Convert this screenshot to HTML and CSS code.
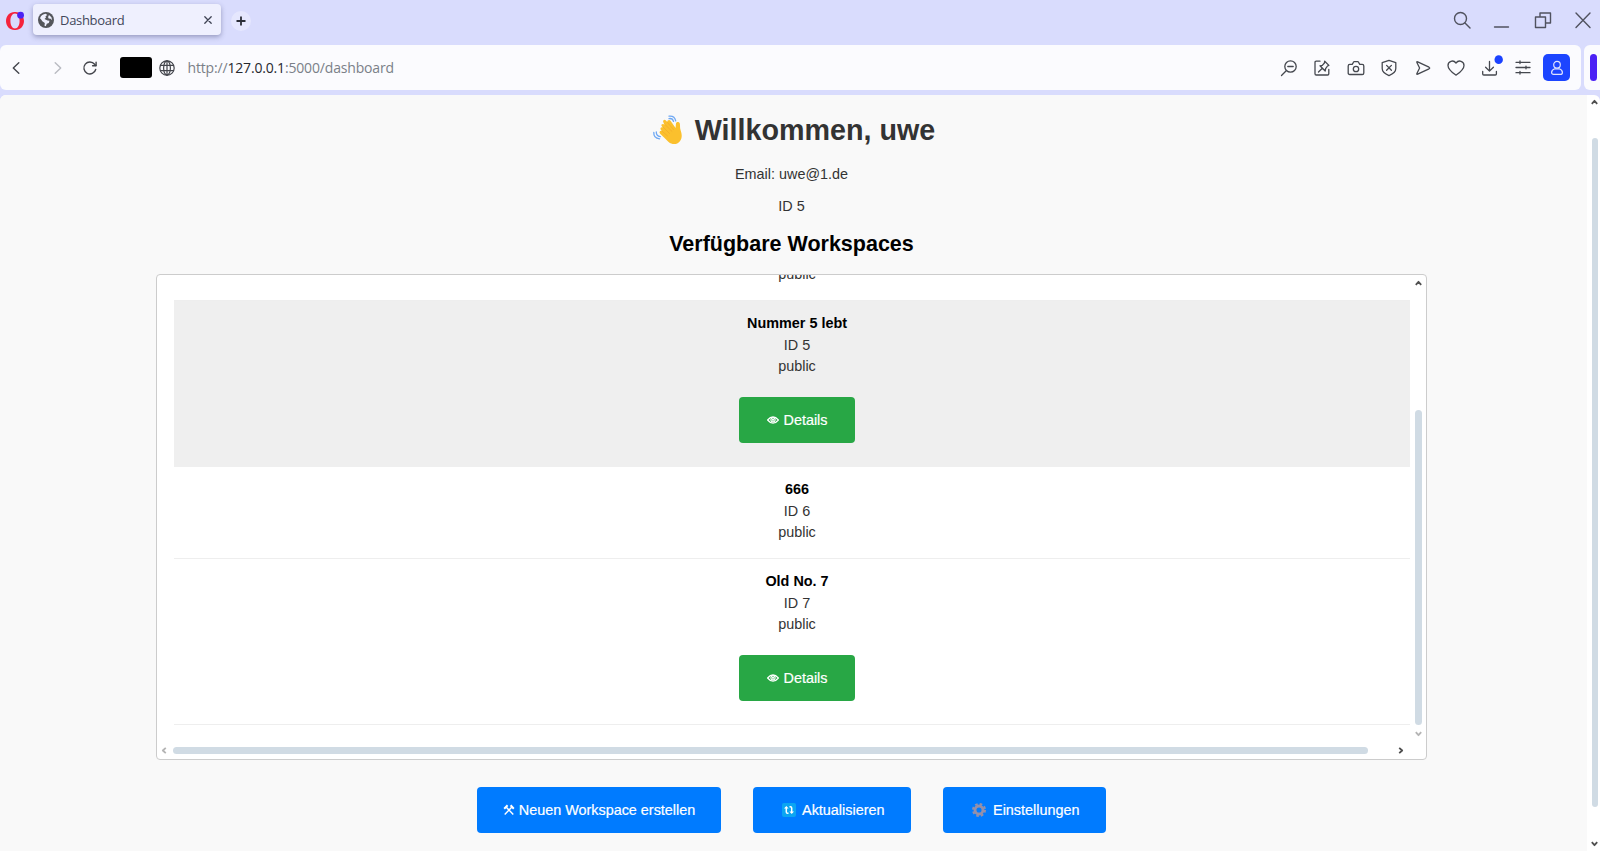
FILE: index.html
```html
<!DOCTYPE html>
<html lang="de">
<head>
<meta charset="utf-8">
<title>Dashboard</title>
<link rel="stylesheet" href="styles.css">
</head>
<body>
<header class="tabstrip">
  <svg class="logo" viewBox="0 0 18 18"><path fill="#f5233c" fill-rule="evenodd" d="M8.500 0C3.600 0 0 3.900 0 9s3.600 9 8.500 9h1C14.400 18 18 14.100 18 9S14.400 0 9.500 0zM9 1.500c2.800 0 4.600 3.200 4.600 7.500s-1.800 7.500-4.600 7.500S4.400 13.300 4.400 9 6.200 1.500 9 1.500z"/><circle cx="14.600" cy="3.200" r="3.400" fill="#4a22f4"/></svg>
  <div class="tab">
    <svg class="favicon" viewBox="0 0 16 16"><circle cx="8" cy="8" r="8" fill="#54565b"/><path fill="#eff0fe" d="M2 6.200C3 3.500 5 2 7.700 1.800L9.300 3 7.500 4.200 8 5.500 6.500 7l3 1.500 2 .2-.7 2.300-2 .8-1 2.400-1.300-.4.300-2.700L4.300 9.300 3.200 7.500zM11 3l2.400 2.200.8 3-1.600-1.400-2-.3-.5-1.400z"/></svg>
    <span class="tab-title">Dashboard</span>
    <svg class="tab-close" viewBox="0 0 8 8"><path d="M.8.8l6.400 6.400M7.200.8L.8 7.200"/></svg>
  </div>
  <div class="newtab"><svg viewBox="0 0 10 10"><path d="M5 .5v9M.5 5h9"/></svg></div>
  <div class="window-icons">
    <svg viewBox="0 0 18 18"><circle cx="7.500" cy="7.500" r="6"/><path d="M12 12l5 5"/></svg>
    <svg viewBox="0 0 18 18"><path d="M1.500 16h14"/></svg>
    <svg viewBox="0 0 18 18"><path d="M1.500 6h10v10.500h-10zM6 6V2h10.500v10h-5"/></svg>
    <svg viewBox="0 0 18 18"><path d="M2 2l14 14.500M16 2L2 16.500"/></svg>
  </div>
</header>
<div class="bars">
  <nav class="toolbar">
    <svg class="back" viewBox="0 0 8 12"><path d="M6.800.7L1.300 6l5.500 5.300"/></svg>
    <svg class="forward" viewBox="0 0 8 12"><path d="M1.200.7L6.700 6l-5.500 5.300"/></svg>
    <svg class="reload" viewBox="0 0 14 14"><path d="M12.700 8.500A6 6 0 1 1 11.600 3.200l1.200 1.300"/><path d="M9.600 4.700h3.500V1.200" /></svg>
    <span class="redacted"></span>
    <svg class="globe" viewBox="0 0 16 16"><circle cx="8" cy="8" r="7.200"/><ellipse cx="8" cy="8" rx="3.400" ry="7.200"/><path d="M1.600 5.300h12.800M1.600 10.700h12.800M8 .8v14.400"/></svg>
    <span class="url">http://<b>127.0.0.1</b>:5000/dashboard</span>
    <div class="actions">
      <svg viewBox="0 0 18 18"><circle cx="10.500" cy="7.500" r="5.700"/><path d="M7.800 7.500h5.400M6.200 11.800L1.500 16.500"/></svg>
      <svg viewBox="0 0 18 18"><path d="M7 2.200H3.200Q2 2.200 2 3.400v11.400Q2 16 3.200 16h11.400q1.200 0 1.200-1.200V10.500M11.700 2.200l4.200 4.200-1.400.6-1.900 2.700-.4 2.300-5.200-5.200 2.300-.4L11.400 4zM9.300 9.200L5.500 13"/></svg>
      <svg viewBox="0 0 18 18"><path d="M2.800 5.300h2.400l1.200-2q.3-.6 1-.6h3.200q.7 0 1 .6l1.200 2h2.400q1.600 0 1.600 1.600v7q0 1.600-1.600 1.600H2.800q-1.600 0-1.600-1.600v-7q0-1.600 1.600-1.600z"/><circle cx="9" cy="10" r="2.700"/></svg>
      <svg viewBox="0 0 18 18"><path d="M9 1.400l6.800 2.200v6Q15.800 14 9 16.600 2.200 14 2.200 9.600v-6zM6.600 6.400l4.800 4.800M11.400 6.400l-4.800 4.800"/></svg>
      <svg viewBox="0 0 18 18"><path d="M3.700 2.800l11.300 5.400q1.400.8 0 1.600L3.700 15.200q-1.200.4-.8-.7L5.600 9 2.900 3.500q-.4-1.100.8-.7z"/></svg>
      <svg viewBox="0 0 18 18"><path d="M9 16.200C6 14 1 10.600 1 6.400 1 2.200 6.200.4 9 4c2.800-3.600 8-1.800 8 2.400 0 4.200-5 7.600-8 9.800z"/></svg>
      <svg class="download" viewBox="0 0 18 18"><path d="M8.500 2.500v9.300M4.600 8.200l3.900 3.900 3.900-3.900M1.700 12.500v2.400q0 1.100 1.100 1.100h11.500q1.100 0 1.100-1.100v-2.400"/><ellipse class="badge" cx="17.700" cy="0.700" rx="4.200" ry="4.400"/></svg>
      <svg viewBox="0 0 18 18"><path d="M2 3.300h14M2 8.500h14M2 13.700h14M6 2v2.600M12 7.200v2.600M6 12.400V15"/></svg>
      <div class="avatar"><svg viewBox="0 0 14 16"><circle cx="7" cy="4.700" r="3.300"/><path d="M4.800 8.800h4.400Q12.400 10 12.400 12.400q0 2-2 2H3.600q-2 0-2-2Q1.600 10 4.800 8.800z"/></svg></div>
    </div>
  </nav>
  <aside class="side"><span></span></aside>
</div>
<div class="page">
  <main class="content">
    <h1><svg class="wave" viewBox="0 0 30 30"><path fill="#fbc02d" d="M8.600 9.600c1-1 2.200-.5 3 .4L10.300 7.200c-.9-1.700 1.300-3.300 2.600-1.800l1.400 1.500c-.2-1.800 2.200-2.600 3.200-1.200l5.100 7.200.3-4c.1-2.200 3.300-2.600 3.900-.3.500 2-.1 3.800.8 6.700 1.400 4.200 1.900 7.600-.7 10.900-2.800 3.600-7.800 3.700-11.300.8L7.200 18.800c-1.700-1.600.2-3.900 2-2.600l-1.200-1.300c-1.500-1.700.4-3.500 1.900-2.400l-.9-1c-.5-.7-.9-1.300-.4-1.900z"/><path d="M10 12l6.500 6.500M11.800 9.300l7.100 7M14.500 7.500l6 7M9.200 16.300l5.300 4.600" fill="none" stroke="#f0a52b" stroke-width=".6"/><path d="M16 1.200c3.500-.5 6 1.500 6.700 4.600M16 3.600c2.500-.4 4 .9 4.500 2.800M.8 17.500c-.2 3.500 2 5.900 5.800 6.300M3.300 17c-.1 2.600 1.500 4.200 4 4.700" fill="none" stroke="#6ea8f3" stroke-width="1.300"/></svg> Willkommen, uwe</h1>
    <p>Email: uwe@1.de</p>
    <p class="user-id">ID 5</p>
    <h2>Verfügbare Workspaces</h2>
    <section class="box">
      <div class="box-row">
        <ul class="list">
          <li class="plain"><span>public</span></li>
          <li class="active"><strong>Nummer 5 lebt</strong><span>ID 5</span><span>public</span>
            <button class="details"><svg viewBox="0 0 12 8"><path d="M.6 4Q6-2.400 11.400 4 6 10.400.6 4z"/><circle cx="6" cy="3.800" r="2.100"/><circle cx="6" cy="3.800" r=".5"/></svg><span>Details</span></button></li>
          <li class="plain"><strong>666</strong><span>ID 6</span><span>public</span></li>
          <li class="last"><strong>Old No. 7</strong><span>ID 7</span><span>public</span>
            <button class="details"><svg viewBox="0 0 12 8"><path d="M.6 4Q6-2.400 11.400 4 6 10.400.6 4z"/><circle cx="6" cy="3.800" r="2.100"/><circle cx="6" cy="3.800" r=".5"/></svg><span>Details</span></button></li>
        </ul>
        <div class="vbar">
          <svg class="arrow" viewBox="0 0 7 6"><path d="M.8 4.800l2.700-3 2.700 3"/></svg>
          <span class="vthumb"></span>
          <svg class="arrow dim" viewBox="0 0 7 6"><path d="M.8 1.200l2.700 3 2.700-3"/></svg>
        </div>
      </div>
      <div class="hbar">
        <svg class="harrow dim" viewBox="0 0 6 7"><path d="M4.800.8l-3 2.700 3 2.700"/></svg>
        <span class="hthumb"></span>
        <svg class="harrow" viewBox="0 0 6 7"><path d="M1.200.8l3 2.700-3 2.700"/></svg>
      </div>
    </section>
    <div class="buttons">
      <button class="create"><svg viewBox="0 0 12 12"><path d="M3.300 3.200l7 7.400M8.700 3.200L1.700 10.600" stroke-width="1.400"/><path d="M1.200 4.700L4.600 1.300M7.600 1.300l3.200 3.400" stroke-width="2"/></svg><span>Neuen Workspace erstellen</span></button>
      <button class="refresh"><svg viewBox="0 0 14 14"><rect width="14" height="14" rx="2" fill="#0ba5f2" stroke="none"/><path d="M4.300 4.500V9q0 1.300 1.300 1.300h.9M9.700 9.500V5q0-1.300-1.300-1.300h-.9" stroke-width="1.500"/><path d="M2 5.500L4.300 3l2.300 2.500zM7.400 8.600L9.700 11.100 12 8.600z" fill="#fff" stroke="none"/></svg><span>Aktualisieren</span></button>
      <button class="settings"><svg viewBox="0 0 14 14"><circle cx="7" cy="7" r="6" stroke="#9590aa" stroke-width="2" stroke-dasharray="2.600 2.112"/><circle cx="7" cy="7" r="4" stroke="#9590aa" stroke-width="2.900"/></svg><span>Einstellungen</span></button>
    </div>
  </main>
  <div class="pagebar">
    <svg class="arrow" viewBox="0 0 7 6"><path d="M.8 4.800l2.700-3 2.700 3"/></svg>
    <span class="pagethumb"></span>
    <svg class="arrow" viewBox="0 0 7 6"><path d="M.8 1.200l2.700 3 2.700-3"/></svg>
  </div>
</div>
</body>
</html>
```
FILE: styles.css
```css
* { box-sizing: border-box; }
body {
  margin: 0;
  height: 851px;
  overflow: hidden;
  background: #d9dcfd;
  font: 14.4px/21.6px "Liberation Sans", Arial, sans-serif;
  color: #333;
}
svg { display: block; flex: none; fill: none; overflow: visible; stroke-linecap: round; stroke-linejoin: round; }

/* Tab strip */
.tabstrip { display: flex; height: 45px; padding: 4px 8px 0 6px; }
.logo { width: 18px; height: 18px; margin: 8px 9px 0 0; }
.tab {
  display: flex;
  align-items: center;
  width: 188px;
  height: 31px;
  padding: 0 9px 0 5px;
  border-radius: 4px;
  background: #eff0fe;
  box-shadow: 0 2px 5px rgba(70, 75, 120, .45);
}
.favicon { width: 16px; height: 16px; }
.tab-title { flex: 1; margin-left: 6px; font: 13px "Open Sans", sans-serif; letter-spacing: -.3px; color: #43475a; }
.tab-close { width: 8px; height: 8px; stroke: #3f4354; stroke-width: 1.3; }
.newtab {
  display: flex;
  align-items: center;
  justify-content: center;
  width: 20px;
  height: 20px;
  margin: 7px 0 0 9.500px;
  border-radius: 50%;
  background: #e5e7fe;
}
.newtab svg { width: 10px; height: 10px; stroke: #2b2e38; stroke-width: 1.8; stroke-linecap: butt; }
.window-icons { display: flex; gap: 22.500px; margin: 7px 0 0 auto; }
.window-icons svg { width: 18px; height: 18px; stroke: #50525f; stroke-width: 1.4; }

/* Address bar */
.bars { display: flex; gap: 3px; height: 45px; }
.toolbar { display: flex; align-items: center; width: 1581px; padding: 0 11px 0 12px; border-radius: 6px; background: #fbfbfe; }
.toolbar > svg { stroke: #43454c; stroke-width: 1.4; margin-top: 1px; }
.back { width: 8px; height: 12px; }
.toolbar > .forward { width: 8px; height: 12px; margin-left: 34px; stroke: #b9bbc2; }
.reload { width: 14px; height: 14px; margin-left: 21px; }
.redacted { width: 32px; height: 21px; margin-left: 23px; border-radius: 3px; background: #000; }
.toolbar > .globe { width: 16px; height: 16px; margin-left: 7px; stroke-width: 1.2; }
.url { margin-left: 12.500px; font: 14px "Open Sans", sans-serif; letter-spacing: -.17px; color: #7a8088; white-space: nowrap; }
.url b { font-weight: 400; color: #26282e; }
.actions { display: flex; align-items: center; gap: 15.600px; margin-left: auto; }
.actions > svg { width: 18px; height: 18px; margin-right: -.05px; stroke: #45484f; stroke-width: 1.3; position: relative; left: 1px; }
.actions .badge { fill: #1b42ff; stroke: none; }
.avatar { display: flex; align-items: center; justify-content: center; width: 27px; height: 27px; margin-left: -4px; border-radius: 5px; background: #1c45ff; }
.avatar svg { width: 14px; height: 16px; stroke: #dfe4ff; stroke-width: 1.2; }
.side { display: flex; align-items: center; flex: 1; padding-left: 6px; border-radius: 6px 0 0 6px; background: #fbfbfe; }
.side span { width: 7px; height: 27px; border-radius: 4px; background: #4b20f5; }

/* Page */
.page { display: flex; height: 756px; margin-top: 5px; border-radius: 6px 6px 0 0; overflow: hidden; background: #fff; }
.content { display: flex; flex-direction: column; align-items: center; width: 1587px; padding-right: 4px; background: #f9f9f9; }
h1 { display: flex; align-items: center; gap: 12px; margin: 18px 0 0 5px; font-size: 28.700px; line-height: 34px; white-space: nowrap; color: #333; }
.wave { width: 30px; height: 30px; }
p { margin: 17px 0 0; }
.user-id { margin-top: 10px; }
h2 { margin: 11px 0 0; font-size: 21.500px; line-height: 32px; color: #000; }
.box {
  display: flex;
  flex-direction: column;
  width: 1271px;
  height: 486px;
  margin-top: 14px;
  border: 1px solid #ccc;
  border-radius: 4px;
  background: #fff;
  overflow: hidden;
}
.box-row { display: flex; height: 465px; overflow: hidden; }
.list { width: 1236px; height: 461px; margin: -11.400px 5px 0 17px; padding: 0; list-style: none; }
.list li { display: flex; flex-direction: column; align-items: center; padding: 12px 0 23px 10px; border-bottom: 1px solid #eee; }
.list .plain { height: 92px; padding-bottom: 14px; }
.list .plain:first-child { height: 37.400px; padding-top: 0; }
.list .active { height: 166px; background: #efefef; border-bottom-color: #efefef; }
.list .last { height: 166px; }
strong { color: #000; }
button {
  display: flex;
  align-items: center;
  justify-content: center;
  padding: 0;
  border: 0;
  border-radius: 4px;
  font: 14.4px "Liberation Sans", Arial, sans-serif;
  color: #fff;
  -webkit-text-stroke: .2px #fff;
  white-space: nowrap;
}
button span { padding-top: 1px; }
.details { flex: none; width: 116px; height: 46px; gap: 5px; margin-top: 19px; background: #28a745; }
.details svg { width: 12px; height: 8px; stroke: #fff; stroke-width: 1.2; }

/* Scroll bars */
.arrow { width: 7px; height: 6px; stroke: #505050; stroke-width: 1.8; stroke-linecap: butt; }
.harrow { width: 6px; height: 7px; stroke: #505050; stroke-width: 1.8; stroke-linecap: butt; }
.dim { stroke: #b5b5b5; }
.vbar { display: flex; flex-direction: column; align-items: center; padding-top: 5px; }
.vthumb { width: 7px; height: 315px; margin: 124px 0 6px; border-radius: 4px; background: #d0dbe4; }
.hbar { display: flex; align-items: center; height: 19px; padding: 2px 0 0 4px; }
.hthumb { width: 1195px; height: 7px; margin: 0 30px 0 6px; border-radius: 4px; background: #d0dbe4; }
.pagebar { display: flex; flex-direction: column; align-items: center; width: 13px; padding: 4px 0 0 2px; }
.pagethumb { width: 6px; height: 669px; margin: 33px 0 34px; border-radius: 3px; background: #d0dbe4; }

/* Page buttons */
.buttons { display: flex; gap: 31.500px; margin: 26.500px 0 0; }
.buttons button { height: 46.500px; background: #007bff; }
.buttons svg { stroke: #fff; stroke-linecap: butt; }
.create { width: 244px; gap: 4px; }
.create svg { width: 12px; height: 12px; }
.refresh { width: 158.500px; gap: 6px; padding-left: 3px; }
.refresh svg, .settings svg { width: 14px; height: 14px; }
.settings { width: 163.500px; gap: 7px; padding-left: 3px; }
```
